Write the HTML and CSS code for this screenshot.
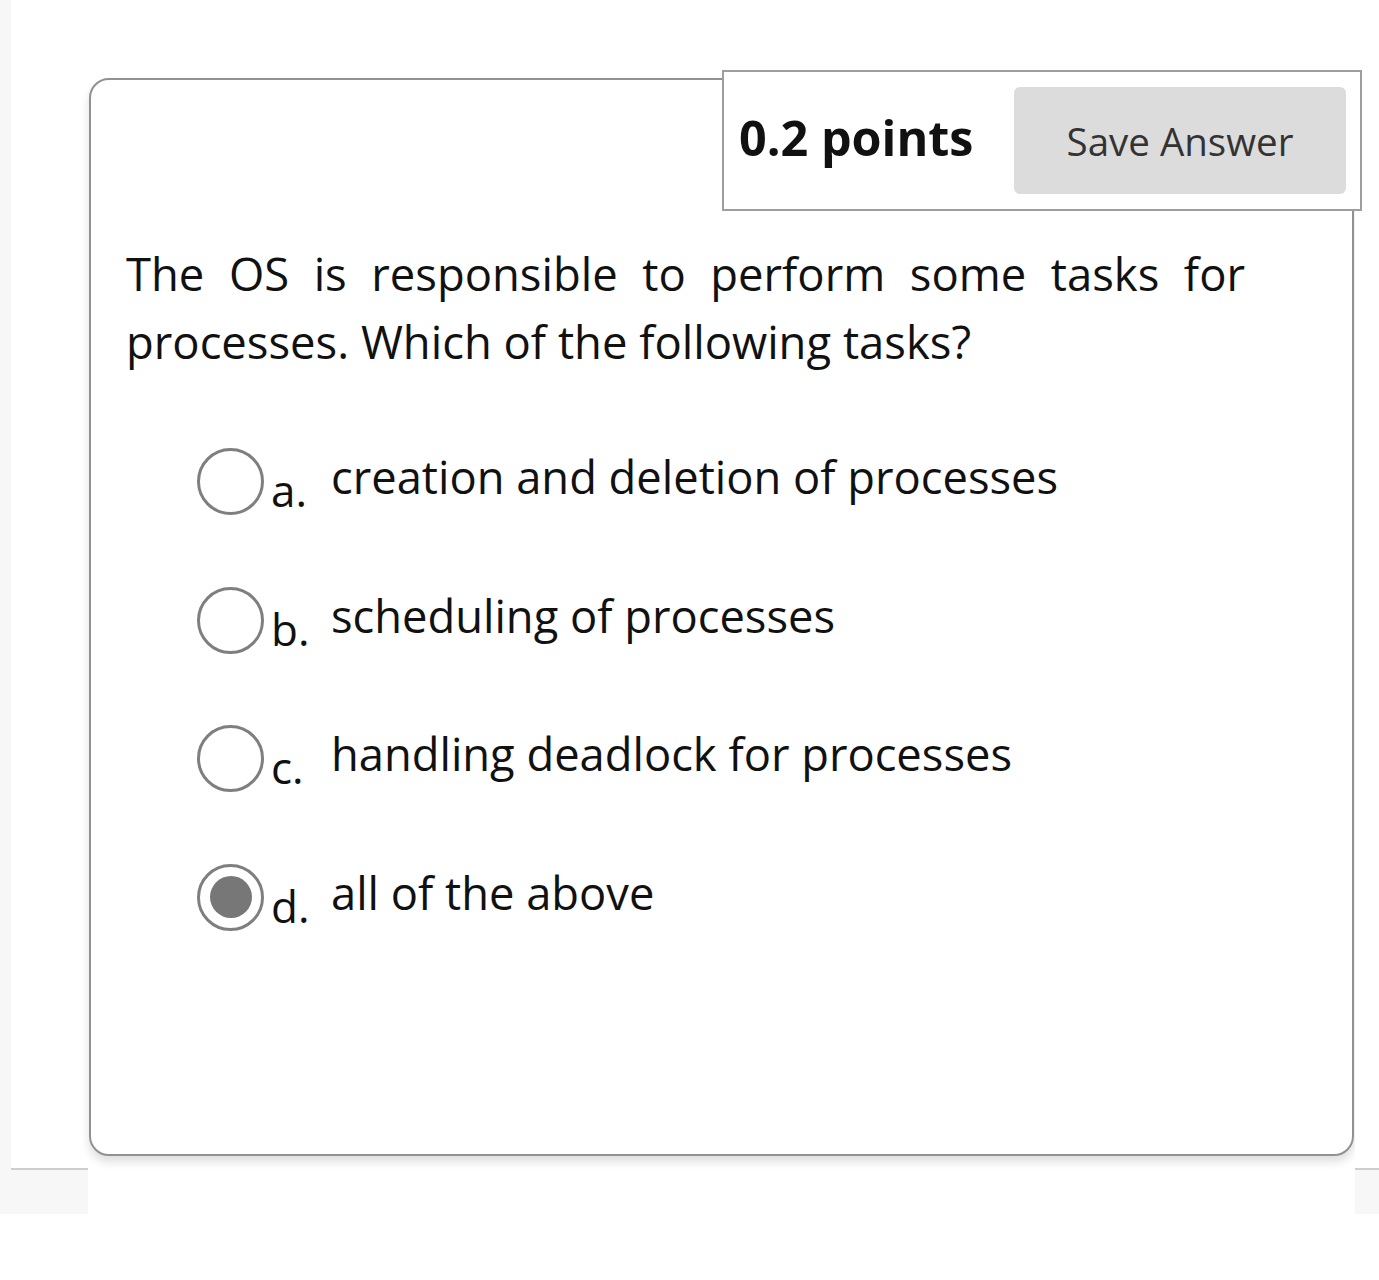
FILE: index.html
```html
<!DOCTYPE html>
<html lang="en">
<head>
<meta charset="utf-8">
<title>Question</title>
<link rel="stylesheet" href="styles.css">
</head>
<body>
<div class="screen">
  <div class="gutter"></div>
  <div class="side side-left"></div>
  <main class="main">
    <section class="card">
      <div class="card-head">
        <div class="points-box">
          <span class="points">0.2 points</span>
          <button class="save" type="button">Save Answer</button>
        </div>
      </div>
      <p class="question">The OS is responsible to perform some tasks for processes. Which of the following tasks?</p>
      <ul class="options">
        <li class="option"><span class="radio"></span><span class="opt-label">a.</span><span class="opt-text">creation and deletion of processes</span></li>
        <li class="option"><span class="radio"></span><span class="opt-label">b.</span><span class="opt-text">scheduling of processes</span></li>
        <li class="option"><span class="radio"></span><span class="opt-label">c.</span><span class="opt-text">handling deadlock for processes</span></li>
        <li class="option"><span class="radio radio-checked"></span><span class="opt-label">d.</span><span class="opt-text">all of the above</span></li>
      </ul>
    </section>
  </main>
  <div class="side side-right"></div>
</div>
</body>
</html>
```
FILE: styles.css
```css
html, body {
  margin: 0;
  padding: 0;
  background: #fff;
}

body {
  font-family: "Open Sans", "Noto Sans", sans-serif;
  color: #111;
}

.screen {
  display: flex;
  align-items: flex-start;
  height: 1214px;
  background: #f7f7f7;
}

.gutter {
  width: 11px;
  flex: none;
}

.side {
  height: 1168px;
  background: #fff;
  border-bottom: 2px solid #cdcdcd;
}

.side-left {
  width: 77px;
  flex: none;
}

.side-right {
  flex: 1;
}

.main {
  width: 1267px;
  height: 1214px;
  flex: none;
  background: #fff;
}

.card {
  margin: 78px 0 0 1px;
  width: 1265px;
  height: 1078px;
  box-sizing: border-box;
  border: 2px solid #919191;
  border-radius: 20px;
  background: #fff;
  box-shadow: 0 6px 10px rgba(0, 0, 0, 0.13);
}

.card-head {
  display: flex;
  justify-content: flex-end;
  margin: -10px -10px 0 0;
}

.points-box {
  position: relative;
  z-index: 1;
  width: 640px;
  height: 141px;
  box-sizing: border-box;
  border: 2px solid #9e9e9e;
  background: #fff;
  display: flex;
  align-items: center;
  justify-content: space-between;
  padding: 0 14px 0 15px;
}

.points {
  font-size: 48.5px;
  font-weight: 700;
  line-height: 1;
  color: #111;
  margin-top: -6px;
}

.save {
  width: 332px;
  height: 107px;
  border: 0;
  border-radius: 6px;
  background: #dcdcdc;
  font-family: "Open Sans", "Noto Sans", sans-serif;
  font-size: 38.5px;
  font-weight: 400;
  color: #333;
  padding: 0;
}

.question {
  margin: 28px 0 0 35px;
  width: 1119px;
  font-size: 45.4px;
  line-height: 68px;
  text-align: justify;
  color: #111;
}

.options {
  list-style: none;
  margin: 73px 0 0 106px;
  padding: 0;
  display: flex;
  flex-direction: column;
  gap: 71.5px;
}

.option {
  display: flex;
  align-items: flex-start;
  height: 67px;
}

.radio {
  width: 67px;
  height: 67px;
  flex: none;
  box-sizing: border-box;
  border: 3px solid #7f7f7f;
  border-radius: 50%;
  display: flex;
  align-items: center;
  justify-content: center;
}

.radio-checked::after {
  content: "";
  width: 42px;
  height: 42px;
  border-radius: 50%;
  background: #777;
}

.opt-label {
  width: 60px;
  margin-left: 7px;
  padding-top: 20px;
  font-size: 44px;
  line-height: 44px;
  flex: none;
}

.opt-text {
  padding-top: 6px;
  font-size: 45.3px;
  line-height: 45px;
  white-space: nowrap;
}
```
